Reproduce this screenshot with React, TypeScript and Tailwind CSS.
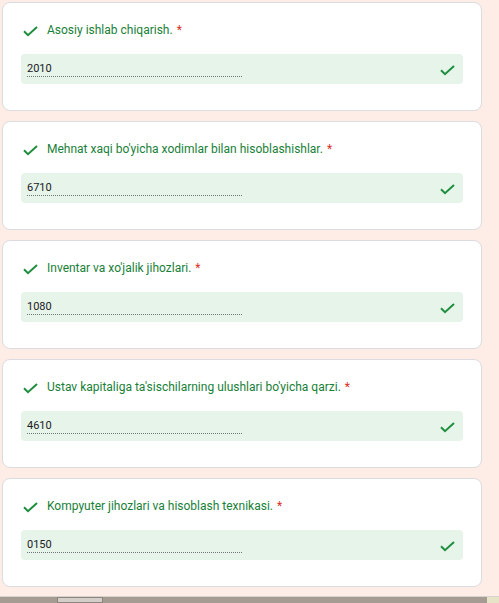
import React from "react";

const items = [
  { title: "Asosiy ishlab chiqarish.", value: "2010" },
  { title: "Mehnat xaqi bo'yicha xodimlar bilan hisoblashishlar.", value: "6710" },
  { title: "Inventar va xo'jalik jihozlari.", value: "1080" },
  { title: "Ustav kapitaliga ta'sischilarning ulushlari bo'yicha qarzi.", value: "4610" },
  { title: "Kompyuter jihozlari va hisoblash texnikasi.", value: "0150" },
];

function Check() {
  return (
    <svg width="15" height="11" viewBox="0 0 15 11" fill="none">
      <path d="M1 5.2 L5 9.2 L14 1" stroke="#1e8e3e" strokeWidth="2" />
    </svg>
  );
}

function Question({ title, value }: { title: string; value: string }) {
  return (
    <div className="h-[109px] w-[480px] shrink-0 rounded-lg border border-[#dadce0] bg-white">
      <div className="flex h-[51px] items-center pl-[20px] pt-[3px]">
        <div className="flex w-[24px] pt-[2px]">
          <Check />
        </div>
        <span className="text-[12px] text-[#188038]">{title}</span>
        <span className="ml-[4px] text-[12px] text-[#d93025]">*</span>
      </div>
      <div className="mx-[18px] flex h-[30px] items-center justify-between rounded-[4px] bg-[#e6f4ea] pl-[6px] pr-[8px]">
        <div className="w-[215px] border-b border-dotted border-[#70757a] text-[11px] leading-[15px] text-[#202124]">
          {value}
        </div>
        <div className="pt-[2px]">
          <Check />
        </div>
      </div>
    </div>
  );
}

export default function App() {
  return (
    <div
      className="flex h-[603px] w-[499px] flex-col overflow-hidden bg-[#fdede6]"
      style={{ fontFamily: "Roboto, 'Liberation Sans', sans-serif" }}
    >
      <div className="flex flex-1 flex-col gap-[10px] pl-[2px] pt-[2px]">
        {items.map((it) => (
          <Question key={it.value} title={it.title} value={it.value} />
        ))}
      </div>
      <div className="h-px bg-[#d6d2cf]" />
      <div className="flex h-[6px] bg-[#a59b92]">
        <div className="ml-[57px] w-[46px] border border-[#8d847c] bg-[#d3cec9]" />
        <div className="ml-auto w-[12px] bg-[#e6e3c6]" />
      </div>
    </div>
  );
}
